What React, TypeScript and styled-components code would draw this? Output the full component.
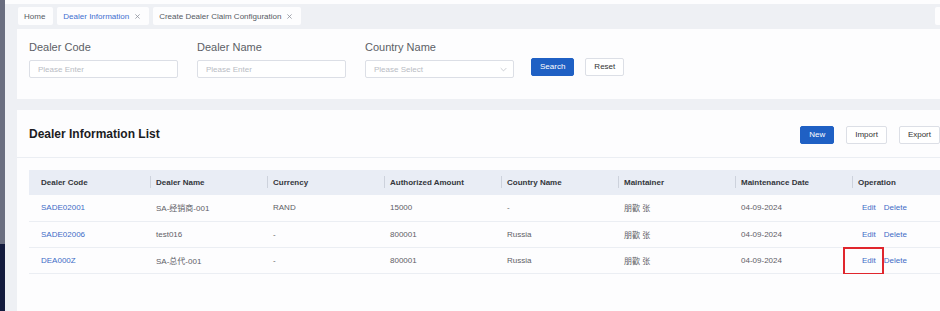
import React from 'react';
import styled, { createGlobalStyle } from 'styled-components';

interface DealerRow {
  code: string;
  name: string;
  currency: string;
  amount: string;
  country: string;
  maintainer: string;
  date: string;
  highlight?: boolean;
}

const rows: DealerRow[] = [
  { code: 'SADE02001', name: 'SA-经销商-001', currency: 'RAND', amount: '15000', country: '-', maintainer: '朋歡 张', date: '04-09-2024' },
  { code: 'SADE02006', name: 'test016', currency: '-', amount: '800001', country: 'Russia', maintainer: '朋歡 张', date: '04-09-2024' },
  { code: 'DEA000Z', name: 'SA-总代-001', currency: '-', amount: '800001', country: 'Russia', maintainer: '朋歡 张', date: '04-09-2024', highlight: true },
];

const columns: string[] = [
  'Dealer Code',
  'Dealer Name',
  'Currency',
  'Authorized Amount',
  'Country Name',
  'Maintainer',
  'Maintenance Date',
  'Operation',
];

const CloseIcon = () => (
  <svg width="7" height="7" viewBox="0 0 10 10">
    <path d="M2 2 L8 8 M8 2 L2 8" stroke="#8a8f99" strokeWidth="1.1" fill="none" />
  </svg>
);

const Chevron = () => (
  <svg width="7" height="5" viewBox="0 0 10 6">
    <path d="M1 1 L5 5 L9 1" stroke="#b4b8c0" strokeWidth="1" fill="none" />
  </svg>
);

const App: React.FC = () => {
  return (
    <>
      <GlobalStyle />
      <Page>
        <Sidebar>
          <SideTop />
          <SideBottom />
        </Sidebar>
        <Main>
          <TopStrip />
          <TabBar>
            <Tab>Home</Tab>
            <Tab active>
              Dealer Information <CloseIcon />
            </Tab>
            <Tab>
              Create Dealer Claim Configuration <CloseIcon />
            </Tab>
            <TabTool />
          </TabBar>

          <SearchPanel>
            <Field>
              <Label>Dealer Code</Label>
              <Input placeholder="Please Enter" />
            </Field>
            <Field>
              <Label>Dealer Name</Label>
              <Input placeholder="Please Enter" />
            </Field>
            <Field>
              <Label>Country Name</Label>
              <SelectBox>
                <span>Please Select</span>
                <Chevron />
              </SelectBox>
            </Field>
            <SearchActions>
              <Button primary>Search</Button>
              <Button>Reset</Button>
            </SearchActions>
          </SearchPanel>

          <ListPanel>
            <ListHeader>
              <Title>Dealer Information List</Title>
              <HeaderActions>
                <Button primary>New</Button>
                <Button>Import</Button>
                <Button>Export</Button>
              </HeaderActions>
            </ListHeader>
            <TableWrap>
              <Table>
                <colgroup>
                  <col style={{ width: 115 }} />
                  {columns.slice(1).map((c) => (
                    <col key={c} style={{ width: 117 }} />
                  ))}
                </colgroup>
                <thead>
                  <tr>
                    {columns.map((c) => (
                      <Th key={c}>{c}</Th>
                    ))}
                  </tr>
                </thead>
                <tbody>
                  {rows.map((r) => (
                    <tr key={r.code}>
                      <Td>
                        <CodeLink>{r.code}</CodeLink>
                      </Td>
                      <Td>{r.name}</Td>
                      <Td>{r.currency}</Td>
                      <Td>{r.amount}</Td>
                      <Td>{r.country}</Td>
                      <Td>{r.maintainer}</Td>
                      <Td>{r.date}</Td>
                      <Td>
                        <OpLink>Edit</OpLink>
                        <OpLink>Delete</OpLink>
                        {r.highlight && <Highlight />}
                      </Td>
                    </tr>
                  ))}
                </tbody>
              </Table>
            </TableWrap>
          </ListPanel>
        </Main>
      </Page>
    </>
  );
};

const GlobalStyle = createGlobalStyle`
  html, body {
    margin: 0;
    padding: 0;
    overflow: hidden;
  }
  body {
    font-family: "Liberation Sans", Arial, "Noto Sans CJK SC", sans-serif;
    background: #eef0f4;
  }
  * { box-sizing: border-box; }
`;

const Page = styled.div`
  display: flex;
  width: 940px;
  height: 311px;
  overflow: hidden;
`;

const Sidebar = styled.div`
  width: 5px;
  flex-shrink: 0;
  display: flex;
  flex-direction: column;
`;

const SideTop = styled.div`
  height: 244px;
  background: #6a6e80;
`;

const SideBottom = styled.div`
  flex: 1;
  background: #131b3d;
`;

const Main = styled.div`
  flex: 1;
  min-width: 0;
  display: flex;
  flex-direction: column;
  background: #eef0f4;
`;

const TopStrip = styled.div`
  height: 4px;
  background: #fdfdfe;
`;

const TabBar = styled.div`
  display: flex;
  gap: 4px;
  padding: 3px 0 4px 13px;
`;

const Tab = styled.div<{ active?: boolean }>`
  height: 18px;
  display: flex;
  align-items: center;
  gap: 5px;
  padding: 0 8px 0 6px;
  background: #fdfdfe;
  border-radius: 2px;
  font-size: 8px;
  color: ${(p) => (p.active ? '#3f6fd0' : '#555a63')};
  white-space: nowrap;
`;

const TabTool = styled.div`
  margin-left: auto;
  width: 12px;
  height: 18px;
  margin-right: -7px;
  background: #fdfdfe;
  border-radius: 2px;
`;

const SearchPanel = styled.div`
  height: 70px;
  margin: 0 -14px 0 12px;
  padding: 12px 12px 0;
  background: #fdfdfe;
  display: flex;
  align-items: flex-start;
  gap: 19px;
`;

const Field = styled.div`
  width: 149px;
  display: flex;
  flex-direction: column;
`;

const Label = styled.label`
  font-size: 11px;
  line-height: 13px;
  color: #5c5f66;
  margin-bottom: 6px;
`;

const Input = styled.input`
  height: 18px;
  width: 100%;
  border: 1px solid #dcdfe6;
  border-radius: 2px;
  padding: 0 8px;
  font-family: inherit;
  font-size: 8px;
  color: #606266;
  background: #fff;
  outline: none;
  &::placeholder {
    color: #b9bcc4;
  }
`;

const SelectBox = styled.div`
  height: 18px;
  border: 1px solid #dcdfe6;
  border-radius: 2px;
  padding: 0 6px 0 8px;
  background: #fff;
  display: flex;
  align-items: center;
  justify-content: space-between;
  font-size: 8px;
  color: #b9bcc4;
`;

const SearchActions = styled.div`
  display: flex;
  gap: 11px;
  margin-top: 17px;
  margin-left: -2px;
`;

const Button = styled.button<{ primary?: boolean }>`
  height: 18px;
  padding: 0 8px;
  border-radius: 2px;
  border: 1px solid ${(p) => (p.primary ? '#1f60c4' : '#dcdfe6')};
  background: ${(p) => (p.primary ? '#1f60c4' : '#fff')};
  color: ${(p) => (p.primary ? '#fff' : '#333')};
  font-family: inherit;
  font-size: 8px;
  line-height: 16px;
  cursor: pointer;
`;

const ListPanel = styled.div`
  flex: 1;
  margin: 11px -12px 0 12px;
  background: #fdfdfe;
  display: flex;
  flex-direction: column;
`;

const ListHeader = styled.div`
  height: 48px;
  padding: 1px 12px 0;
  display: flex;
  align-items: center;
  justify-content: space-between;
  border-bottom: 1px solid #ebeef3;
`;

const Title = styled.h2`
  margin: 0;
  font-size: 12px;
  font-weight: 700;
  color: #1b1c1f;
`;

const HeaderActions = styled.div`
  display: flex;
  gap: 12px;
  margin-top: 1px;
`;

const TableWrap = styled.div`
  margin: 12px 12px 0;
  overflow: hidden;
`;

const Table = styled.table`
  width: 934px;
  table-layout: fixed;
  border-collapse: collapse;
`;

const Th = styled.th`
  position: relative;
  height: 25px;
  padding: 0 12px;
  background: #e9edf5;
  text-align: left;
  font-size: 8px;
  font-weight: 700;
  color: #33363b;
  white-space: nowrap;
  & + &::before {
    content: '';
    position: absolute;
    left: 6px;
    top: 6px;
    bottom: 7px;
    width: 1px;
    background: #cdd2dc;
  }
`;

const Td = styled.td`
  position: relative;
  height: 26px;
  padding: 0 12px;
  border-bottom: 1px solid #ebeef3;
  font-size: 8px;
  color: #5e6066;
  white-space: nowrap;
`;

const CodeLink = styled.a`
  color: #3d6cc6;
  text-decoration: none;
  cursor: pointer;
`;

const OpLink = styled.a`
  padding: 0 4px;
  color: #3d6cc6;
  cursor: pointer;
`;

const Highlight = styled.span`
  position: absolute;
  display: block;
  left: -3px;
  top: -1px;
  width: 41px;
  height: 28px;
  border: 2px solid #e0262d;
  pointer-events: none;
`;

export default App;
